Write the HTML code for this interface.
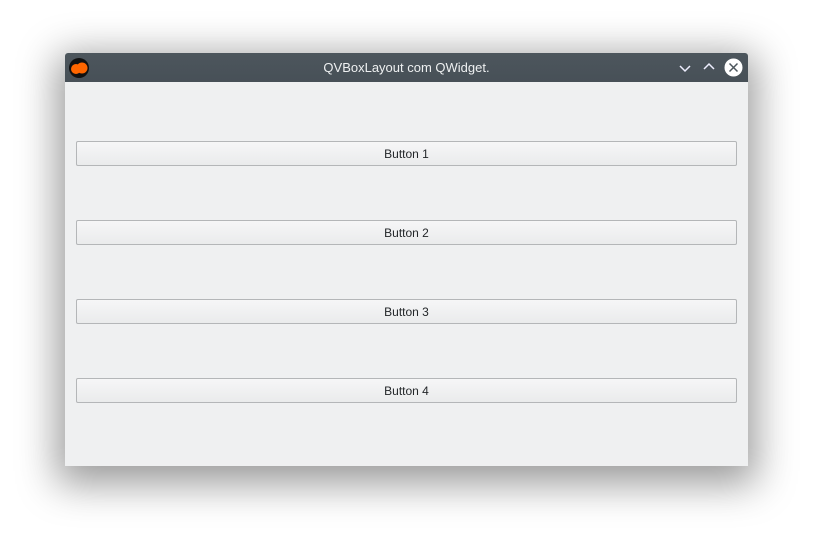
<!DOCTYPE html><html><head><style>
body{margin:0;width:813px;height:543px;background:#fff;position:relative;overflow:hidden;font-family:"Liberation Sans","DejaVu Sans",sans-serif}
.win{position:absolute;left:65px;top:53px;width:683px;height:413px;background:#eff0f1;box-shadow:0 10px 40px 8px rgba(0,0,0,.4);border-radius:3px 3px 0 0}
.tb{height:29px;background:linear-gradient(#4d565d,#475057);border-radius:3px 3px 0 0;color:#eef0f1;font-size:13px;text-align:center;line-height:29px;position:relative}
.btn{position:absolute;left:11px;width:659px;height:23px;border:1px solid #b4b6b8;border-radius:2px;background:linear-gradient(#f6f6f7,#eaebec);font-size:12px;color:#232629;text-align:center;line-height:25px}
</style></head><body>
<div class="win"><div class="tb">QVBoxLayout com QWidget.
<svg style="position:absolute;left:3px;top:4px" width="22" height="22"><circle cx="11" cy="11" r="10" fill="#111"/><circle cx="8" cy="12" r="5" fill="#f60"/><circle cx="14" cy="11" r="5.5" fill="#f60"/></svg>
<svg style="position:absolute;left:613px;top:8px" width="14" height="14"><path d="M2 5l5 5 5-5" stroke="#eef" stroke-width="1.5" fill="none"/></svg>
<svg style="position:absolute;left:637px;top:7px" width="14" height="14"><path d="M2 9l5-5 5 5" stroke="#eef" stroke-width="1.5" fill="none"/></svg>
<svg style="position:absolute;left:659px;top:5px" width="19" height="19"><circle cx="9.5" cy="9.5" r="9" fill="#fff"/><path d="M5.5 5.5l8 8M13.5 5.5l-8 8" stroke="#4d565d" stroke-width="1.5"/></svg>
</div>
<div class="btn" style="top:88px">Button 1</div>
<div class="btn" style="top:167px">Button 2</div>
<div class="btn" style="top:246px">Button 3</div>
<div class="btn" style="top:325px">Button 4</div>
</div></body></html>
